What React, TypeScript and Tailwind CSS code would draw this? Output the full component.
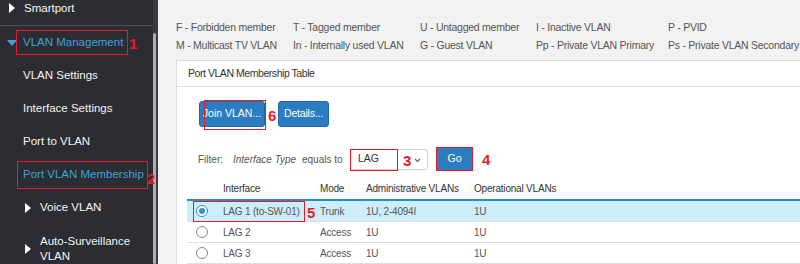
const font = "font-['Liberation_Sans',Arial,sans-serif]";

function Tri({ down = false }: { down?: boolean }) {
  return down ? (
    <span className="inline-block h-0 w-0 border-x-[5px] border-t-[6px] border-x-transparent border-t-[#3ba2dd]" />
  ) : (
    <span className="inline-block h-0 w-0 border-y-[5px] border-l-[6px] border-y-transparent border-l-white" />
  );
}

function Mark({ n, className }: { n: string; className: string }) {
  return <span className={`absolute text-[15px] font-bold leading-none tracking-normal text-[#e8192c] ${className}`}>{n}</span>;
}

function Sidebar() {
  const item = "flex h-[33px] items-center text-[11.5px] text-[#f4f4f4]";
  return (
    <aside className="flex w-[153px] shrink-0 flex-col bg-[#2c2d32]">
      <div className="flex h-[25px] items-start gap-[9px] pl-[9px] text-[11.5px] leading-[16px] text-[#f4f4f4]">
        <span className="mt-[3px] flex"><Tri /></span>
        <span>Smartport</span>
      </div>
      <div className="h-px bg-[#4b4c52]" />
      <div className={`${item} relative pl-[7px]`}>
        <span className="mr-[6px] flex"><Tri down /></span>
        <span className="relative text-[#3ba2dd]">
          VLAN Management
          <span className="absolute -left-[7px] -right-[5px] -top-[4px] -bottom-[4px] border-[1.5px] border-[#e8192c]" />
        </span>
        <Mark n="1" className="left-[129px] top-[10px]" />
      </div>
      <div className={`${item} pl-[23px]`}>VLAN Settings</div>
      <div className={`${item} pl-[23px]`}>Interface Settings</div>
      <div className={`${item} pl-[23px]`}>Port to VLAN</div>
      <div className={`${item} relative pl-[23px]`}>
        <span className="relative whitespace-nowrap text-[#3ba2dd]">
          Port VLAN Membership
          <span className="absolute -left-[6px] -right-[4px] -top-[5px] -bottom-[6px] border-[1.5px] border-[#e8192c]" />
        </span>
        <Mark n="2" className="left-[147px] top-[13px]" />
      </div>
      <div className={`${item} gap-[9px] pl-[25px]`}>
        <Tri />
        <span>Voice VLAN</span>
      </div>
      <div className="mt-[10px] flex items-center gap-[9px] pl-[25px] text-[11.5px] leading-[15px] text-[#f4f4f4]">
        <Tri />
        <span>Auto-Surveillance<br />VLAN</span>
      </div>
    </aside>
  );
}

const legend = [
  ["F - Forbidden member", "M - Multicast TV VLAN", "w-[117px]"],
  ["T - Tagged member", "In - Internally used VLAN", "w-[127px]"],
  ["U - Untagged member", "G - Guest VLAN", "w-[116px]"],
  ["I - Inactive VLAN", "Pp - Private VLAN Primary", "w-[132px]"],
  ["P - PVID", "Ps - Private VLAN Secondary", "w-[150px]"],
];

const rows = [
  { name: "LAG 1 (to-SW-01)", mode: "Trunk", admin: "1U, 2-4094I", op: "1U", sel: true },
  { name: "LAG 2", mode: "Access", admin: "1U", op: "1U", sel: false },
  { name: "LAG 3", mode: "Access", admin: "1U", op: "1U", sel: false },
];

const cols = "grid grid-cols-[36px_97px_46px_108px_1fr]";

export default function App() {
  return (
    <div className={`${font} flex h-[264px] w-[800px] overflow-hidden bg-[#f2f2f2]`}>
      <Sidebar />
      <div className="flex w-[5px] shrink-0 flex-col bg-[#3a3b40]">
        <div className="mt-[33px] h-full w-[3px] rounded-sm bg-[#aeaeb0]" />
      </div>
      <main className="flex min-w-0 flex-1 flex-col pl-[18px]">
        <div className="flex h-[61px] pt-[18px] text-[10.5px] leading-[18px] tracking-[-0.25px] text-[#555]">
          {legend.map(([a, b, w]) => (
            <div key={a} className={`${w} shrink-0 whitespace-nowrap`}>
              <div>{a}</div>
              <div>{b}</div>
            </div>
          ))}
        </div>
        <section className="flex flex-1 flex-col border-l border-t border-[#dcdcdc] bg-white">
          <div className="flex h-[26px] items-center border-b border-[#e0e0e0] pl-[11px] text-[10.5px] tracking-[-0.45px] text-[#333]">
            Port VLAN Membership Table
          </div>
          <div className="mt-[14px] flex gap-[13px] pl-[22px] text-[10.5px]">
            <button className="relative h-[26px] w-[66px] rounded-[3px] border border-[#1f6aa6] bg-[#2b7dc0] text-white">
              Join VLAN...
              <span className="absolute -top-[2px] bottom-[-4px] left-[4px] right-[-2px] border-[1.5px] border-[#e8192c]" />
              <Mark n="6" className="left-[68px] top-[6px]" />
            </button>
            <button className="h-[26px] w-[51px] rounded-[3px] border border-[#1f6aa6] bg-[#2b7dc0] tracking-[-0.2px] text-white">
              Details...
            </button>
          </div>
          <div className="mt-[20px] flex h-[24px] items-center whitespace-nowrap pl-[21px] text-[10px] text-[#555]">
            <span className="w-[35px]">Filter:</span>
            <span className="w-[69px] italic">Interface Type</span>
            <span className="w-[48px]">equals to</span>
            <div className="relative flex h-[21px] w-[78px] items-center rounded-[3px] border border-[#cfcfcf] pl-[7px] text-[10.5px] text-[#333]">
              LAG
              <span className="absolute -left-[1px] -top-[1px] h-[22px] w-[48px] border-[1.5px] border-[#e8192c]" />
              <Mark n="3" className="left-[52px] top-[3px]" />
              <svg className="absolute right-[6px] top-[8px]" width="7" height="5" viewBox="0 0 7 5">
                <path d="M1 1l2.5 2.5L6 1" fill="none" stroke="#666" strokeWidth="1.2" />
              </svg>
            </div>
            <button className="relative ml-[8px] h-[24px] w-[37px] rounded-[3px] border border-[#1f6aa6] bg-[#2b7dc0] text-[10.5px] text-white">
              Go
              <span className="absolute -inset-[1px] border-[1.5px] border-[#e8192c]" />
              <Mark n="4" className="left-[45px] top-[4px]" />
            </button>
          </div>
          <div className="mt-[6px] ml-[10px] text-[10px] tracking-[-0.2px]">
            <div className={`${cols} h-[24px] items-center border-b-2 border-[#1f8fcf] text-[#333]`}>
              <span />
              <span>Interface</span>
              <span>Mode</span>
              <span>Administrative VLANs</span>
              <span className="whitespace-nowrap">Operational VLANs</span>
            </div>
            {rows.map((r) => (
              <div
                key={r.name}
                className={`${cols} relative h-[21px] items-center border-b border-[#dedede] text-[#555] ${r.sel ? "bg-[#cdeef9]" : ""}`}
              >
                <span className="flex pl-[9px]">
                  <span className={`flex h-[12px] w-[12px] items-center justify-center rounded-full border ${r.sel ? "border-[#2b8fd1] bg-white" : "border-[#888] bg-white"}`}>
                    {r.sel && <span className="h-[6px] w-[6px] rounded-full bg-[#2b8fd1]" />}
                  </span>
                </span>
                <span className="whitespace-nowrap">{r.name}</span>
                <span>{r.mode}</span>
                <span>{r.admin}</span>
                <span>{r.op}</span>
                {r.sel && (
                  <>
                    <span className="absolute left-[6px] top-0 h-[21px] w-[112px] border-[1.5px] border-[#e8192c]" />
                    <Mark n="5" className="left-[120px] top-[4px]" />
                  </>
                )}
              </div>
            ))}
          </div>
        </section>
      </main>
    </div>
  );
}
